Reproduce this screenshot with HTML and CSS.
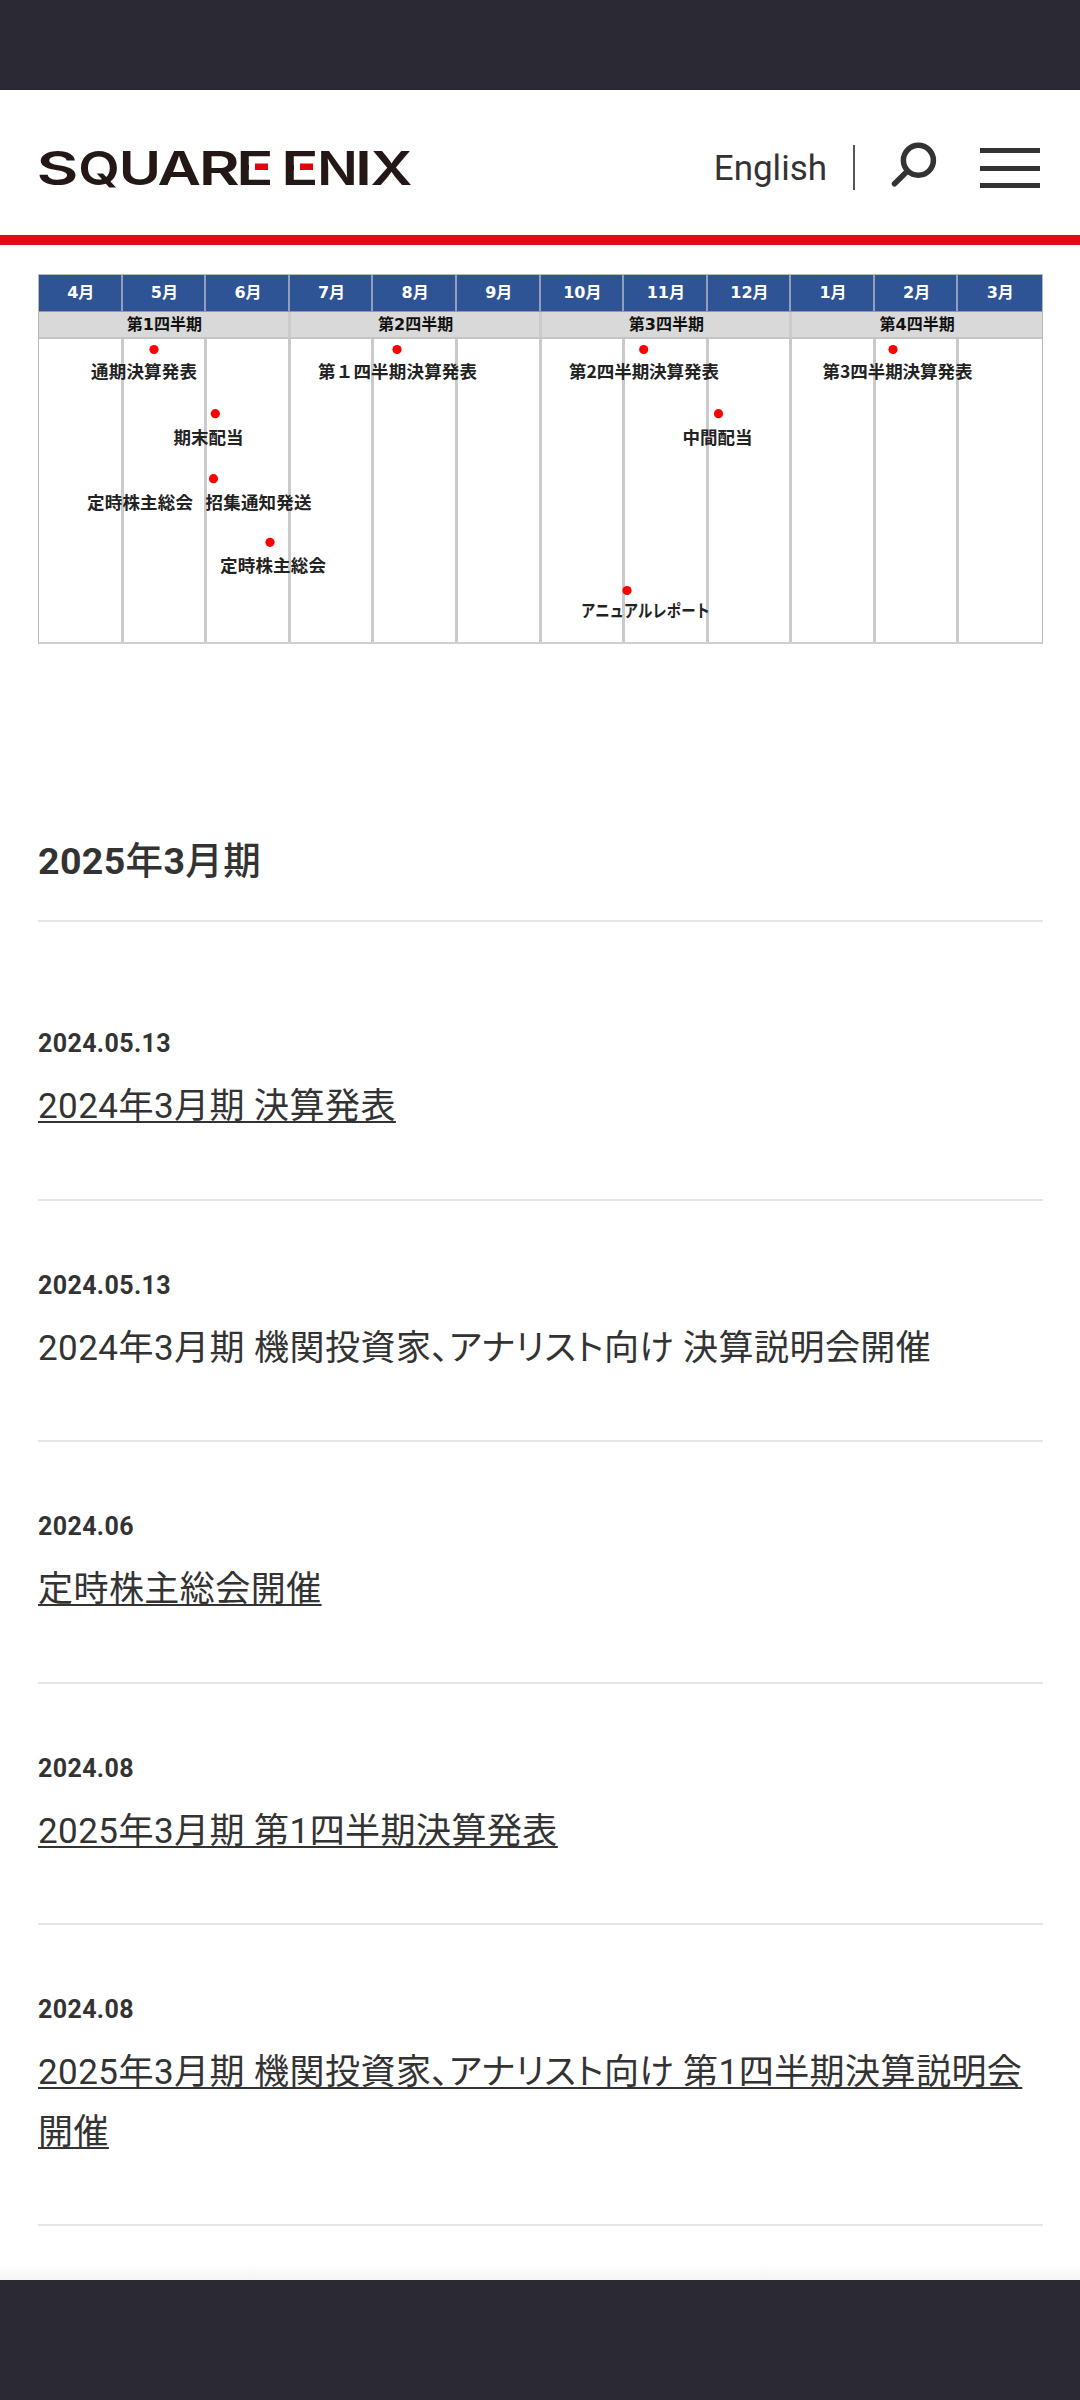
FILE: index.html
```html
<!DOCTYPE html>
<html lang="ja">

<head>
    <meta charset="UTF-8">
    <meta name="viewport" content="width=device-width, initial-scale=1.0">
    <title>IRカレンダー | SQUARE ENIX</title>
    <link rel="stylesheet" href="styles.css">
</head>

<body>
    <div class="status-bar"></div>

    <header class="header">
        <a class="logo" href="#">
            <svg width="382" height="62" viewBox="-4 -10 382 62">
                <text class="logo-text" y="34.5"><tspan x="-1.5" textLength="42" lengthAdjust="spacingAndGlyphs">S</tspan><tspan x="40.3" textLength="41.6" lengthAdjust="spacingAndGlyphs">Q</tspan><tspan x="80.7" textLength="42.3" lengthAdjust="spacingAndGlyphs">U</tspan><tspan x="119.5" textLength="43.5" lengthAdjust="spacingAndGlyphs">A</tspan><tspan x="160.7" textLength="41" lengthAdjust="spacingAndGlyphs">R</tspan><tspan x="198.2" textLength="37.3" lengthAdjust="spacingAndGlyphs">E</tspan></text>
                <text class="logo-text" y="34.5"><tspan x="243.2" textLength="37.3" lengthAdjust="spacingAndGlyphs">E</tspan><tspan x="279.2" textLength="40.5" lengthAdjust="spacingAndGlyphs">N</tspan><tspan x="317" textLength="17" lengthAdjust="spacingAndGlyphs">I</tspan><tspan x="332.5" textLength="42" lengthAdjust="spacingAndGlyphs">X</tspan></text>
                <!-- middle bars of the two E -->
                <rect class="logo-gap" x="211" y="7.5" width="24" height="20" />
                <rect class="logo-gap" x="256" y="7.5" width="24" height="20" />
                <rect class="logo-bar" x="217" y="13.5" width="13" height="6.5" />
                <rect class="logo-bar" x="262" y="13.5" width="13" height="6.5" />
            </svg>
        </a>
        <nav class="header-nav">
            <a class="lang" href="#">English</a>
            <span class="divider"></span>
            <a class="search" href="#">
                <svg width="48" height="48" viewBox="0 0 48 48">
                    <circle cx="29.4" cy="18.3" r="15" />
                    <line x1="18.5" y1="29" x2="5.5" y2="41.8" />
                </svg>
            </a>
            <div class="menu">
                <span></span>
                <span></span>
                <span></span>
            </div>
        </nav>
    </header>

    <main class="main">
        <div class="calendar">
            <div class="months">
                <span>4月</span><span>5月</span><span>6月</span><span>7月</span><span>8月</span><span>9月</span>
                <span>10月</span><span>11月</span><span>12月</span><span>1月</span><span>2月</span><span>3月</span>
            </div>
            <div class="quarters">
                <span>第1四半期</span><span>第2四半期</span><span>第3四半期</span><span>第4四半期</span>
            </div>
            <div class="columns">
                <span></span><span></span><span></span><span></span><span></span><span></span>
                <span></span><span></span><span></span><span></span><span></span><span></span>
            </div>
            <svg class="events" width="1005" height="370" viewBox="0 0 1005 370">
                <circle cx="116" cy="75.5" r="4.6" />
                <text x="53" y="103.5" textLength="106">通期決算発表</text>
                <circle cx="177.3" cy="139.7" r="4.6" />
                <text x="135.5" y="169.5" textLength="70">期末配当</text>
                <circle cx="175.5" cy="204.7" r="4.6" />
                <text x="49" y="234.5" textLength="106">定時株主総会</text>
                <text x="167.5" y="234.5" textLength="106">招集通知発送</text>
                <circle cx="232" cy="268.3" r="4.6" />
                <text x="182" y="297.5" textLength="106">定時株主総会</text>
                <circle cx="359" cy="75.5" r="4.6" />
                <text x="280" y="103.5" textLength="159">第１四半期決算発表</text>
                <circle cx="605.7" cy="75.5" r="4.6" />
                <text x="531" y="103.5" textLength="150">第2四半期決算発表</text>
                <circle cx="680.5" cy="139.7" r="4.6" />
                <text x="644.5" y="169.5" textLength="70">中間配当</text>
                <circle cx="589" cy="316.5" r="4.6" />
                <text x="543" y="342.5" textLength="129" lengthAdjust="spacingAndGlyphs">アニュアルレポート</text>
                <circle cx="855" cy="75.5" r="4.6" />
                <text x="784.5" y="103.5" textLength="150">第3四半期決算発表</text>
            </svg>
        </div>

        <h2 class="heading">2025<span>年</span>3<span>月期</span></h2>

        <ul class="schedule">
            <li>
                <p class="date">2024.05.13</p>
                <p class="title"><a href="#">2024年3月期 決算発表</a></p>
            </li>
            <li>
                <p class="date">2024.05.13</p>
                <p class="title">2024年3月期 機関投資家、アナリスト向け 決算説明会開催</p>
            </li>
            <li>
                <p class="date">2024.06</p>
                <p class="title"><a href="#">定時株主総会開催</a></p>
            </li>
            <li>
                <p class="date">2024.08</p>
                <p class="title"><a href="#">2025年3月期 第1四半期決算発表</a></p>
            </li>
            <li>
                <p class="date">2024.08</p>
                <p class="title"><a href="#">2025年3月期 機関投資家、アナリスト向け 第1四半期決算説明会開催</a></p>
            </li>
        </ul>
    </main>

    <div class="bottom-bar"></div>
</body>

</html>
```
FILE: styles.css
```css
* {
    margin: 0;
    padding: 0;
    box-sizing: border-box;
}

body {
    height: 2400px;
    display: flex;
    flex-direction: column;
    overflow: hidden;
    background-color: #fff;
    color: #333;
    font-family: Roboto, "Noto Sans CJK JP", sans-serif;
    font-size: 35px;
}

a {
    color: inherit;
}

.status-bar {
    height: 90px;
    flex-shrink: 0;
    background-color: #2b2933;
}

/* header */
.header {
    height: 155px;
    flex-shrink: 0;
    display: flex;
    justify-content: space-between;
    padding: 0 40px 0 34px;
    border-bottom: 10px solid #e20a17;
}

.logo {
    margin-top: 50px;
}

.logo svg,
.search svg {
    display: block;
}

.logo-text {
    font-family: Inter, sans-serif;
    font-size: 47px;
    font-weight: 600;
    fill: #231815;
}

.logo-gap {
    fill: #fff;
}

.logo-bar {
    fill: #e60012;
}

.header-nav {
    display: flex;
    align-items: flex-start;
}

.lang {
    margin-top: 58px;
    line-height: 41px;
    text-decoration: none;
}

.divider {
    width: 2px;
    height: 45px;
    margin: 55px 34px 0 26px;
    background-color: #555;
}

.search {
    margin: 52px 43px 0 0;
}

.search svg {
    fill: none;
    stroke: #333;
    stroke-width: 5.5;
    stroke-linecap: round;
}

.menu {
    width: 60px;
    height: 40px;
    margin-top: 58px;
    display: flex;
    flex-direction: column;
    justify-content: space-between;
}

.menu span {
    height: 5px;
    background-color: #333;
}

.main {
    flex: 1;
    padding: 29px 37px 0 38px;
    background: linear-gradient(to top, #f5f5f7, #fff 16px);
}

/* year calendar */
.calendar {
    position: relative;
    height: 370px;
    display: flex;
    flex-direction: column;
    font-family: "DejaVu Sans", "Noto Sans CJK JP", sans-serif;
    border: 1px solid #b8b8b8;
    border-bottom: 2px solid #d0d0d0;
}

.months,
.columns {
    display: grid;
    grid-template-columns: repeat(12, 1fr);
}

.months {
    height: 36px;
    background-color: #2f5496;
    color: #fff;
    font-size: 16px;
    font-weight: bold;
    line-height: 36px;
    text-align: center;
}

.months span + span,
.quarters span + span,
.columns span + span {
    margin-left: -2px;
    border-left: 3px solid #cbcbcb;
}

.months span + span {
    border-color: #8f9fbd;
    border-width: 2px;
}

.quarters {
    height: 28px;
    display: grid;
    grid-template-columns: repeat(4, 1fr);
    background-color: #d9d9d9;
    border-top: 1px solid #999;
    border-bottom: 2px solid #c4c4c4;
    color: #111;
    font-size: 16px;
    font-weight: bold;
    line-height: 25px;
    text-align: center;
}

.columns {
    flex: 1;
}

.events {
    position: absolute;
    top: -1px;
    left: -1px;
    font-family: "Noto Sans CJK JP", sans-serif;
    font-size: 17.5px;
    font-weight: bold;
    fill: #222;
}

.events circle {
    fill: #f00;
}

/* schedule list */
.heading {
    margin-top: 184px;
    height: 94px;
    border-bottom: 2px solid #e5e5e5;
    font-size: 37.5px;
    line-height: 67px;
    letter-spacing: 0.01em;
}

.heading span {
    font-weight: 500;
}

.schedule {
    padding-top: 37px;
    list-style: none;
}

.schedule li {
    padding: 64px 0 62px;
    border-bottom: 2px solid #e5e5e5;
}

.date {
    height: 54px;
    font-size: 25px;
    font-weight: bold;
    line-height: 42px;
    letter-spacing: 0.015em;
}

.title {
    line-height: 59.5px;
    letter-spacing: 0.45px;
    font-feature-settings: "palt";
}

.title a {
    text-decoration-thickness: 2px;
    text-underline-offset: 3px;
    text-decoration-skip-ink: none;
}

.bottom-bar {
    height: 120px;
    flex-shrink: 0;
    background-color: #2b2933;
}
```
